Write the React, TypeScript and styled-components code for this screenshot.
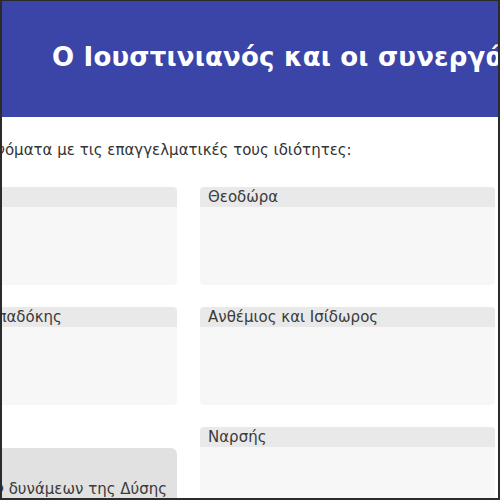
import styled, { createGlobalStyle } from 'styled-components'

const GlobalStyle = createGlobalStyle`
  html, body {
    margin: 0;
    padding: 0;
    background: #ffffff;
  }
`

interface Slot {
  name: string
  choice?: string
}

const leftSlots: Slot[] = [
  { name: 'Βελισάριος' },
  { name: 'Ιωάννης ο Καππαδόκης' },
  { name: '', choice: 'Αρχηγός των δυνάμεων της Δύσης' }
]

const rightSlots: Slot[] = [
  { name: 'Θεοδώρα' },
  { name: 'Ανθέμιος και Ισίδωρος' },
  { name: 'Ναρσής' }
]

export default function App (): JSX.Element {
  return (
    <>
      <GlobalStyle />
      <Frame>
        <Page>
          <Header>
            <Title>Ο Ιουστινιανός και οι συνεργάτες του</Title>
          </Header>
          <Body>
            <Instructions>Αντιστοιχίστε τα ονόματα με τις επαγγελματικές τους ιδιότητες:</Instructions>
            <Board>
              <Column>
                {leftSlots.map((slot, i) => slot.choice
                  ? <ChoiceButton key={i}>{slot.choice}</ChoiceButton>
                  : (
                    <Card key={i}>
                      <CardHead>{slot.name}</CardHead>
                      <CardDrop />
                    </Card>
                    ))}
              </Column>
              <Column>
                {rightSlots.map((slot, i) => (
                  <Card key={i}>
                    <CardHead>{slot.name}</CardHead>
                    <CardDrop />
                  </Card>
                ))}
              </Column>
            </Board>
          </Body>
        </Page>
      </Frame>
    </>
  )
}

const Frame = styled.div`
  box-sizing: border-box;
  width: 500px;
  height: 500px;
  overflow: hidden;

  border: 2px solid #2b2b2b;
  border-top-width: 1px;
  background: #ffffff;
`

const Page = styled.div`
  width: 620px;
  margin-left: -122px;
`

const Header = styled.header`
  display: flex;
  align-items: center;

  box-sizing: border-box;
  height: 116px;
  padding: 0 0 4px 172px;

  background: #3b45a8;
`

const Title = styled.h1`
  margin: 0;
  white-space: nowrap;

  font-family: 'DejaVu Sans', 'Liberation Sans', sans-serif;
  font-size: 26px;
  font-weight: 700;
  letter-spacing: 0.2px;
  color: #ffffff;
`

const Body = styled.main`
  padding: 24px 0 0 0;
`

const Instructions = styled.p`
  margin: 0 0 28px -27px;
  white-space: nowrap;

  font-family: 'DejaVu Sans', 'Liberation Sans', sans-serif;
  font-size: 15px;
  line-height: 18px;
  color: #333333;
`

const Board = styled.div`
  display: grid;
  grid-template-columns: 297px 295px;
  column-gap: 23px;
`

const Column = styled.div`
  display: flex;
  flex-direction: column;
  gap: 22px;
`

const Card = styled.div`
  display: flex;
  flex-direction: column;

  height: 98px;
  border-radius: 4px;
  overflow: hidden;

  background: #f7f7f7;
`

const CardHead = styled.div`
  height: 20px;
  padding-left: 8px;

  background: #e9e9e9;

  font-family: 'DejaVu Sans', 'Liberation Sans', sans-serif;
  font-size: 15px;
  line-height: 21px;
  white-space: nowrap;
  color: #3a3a3a;
`

const CardDrop = styled.div`
  flex: 1;
`

const ChoiceButton = styled.button`
  height: 60px;
  margin-top: 21px;
  padding: 22px 10px 0 10px;
  border: none;
  border-radius: 6px;

  background: #e1e1e1;

  text-align: right;
  white-space: nowrap;
  font-family: 'DejaVu Sans', 'Liberation Sans', sans-serif;
  font-size: 15px;
  color: #3a3a3a;
`
